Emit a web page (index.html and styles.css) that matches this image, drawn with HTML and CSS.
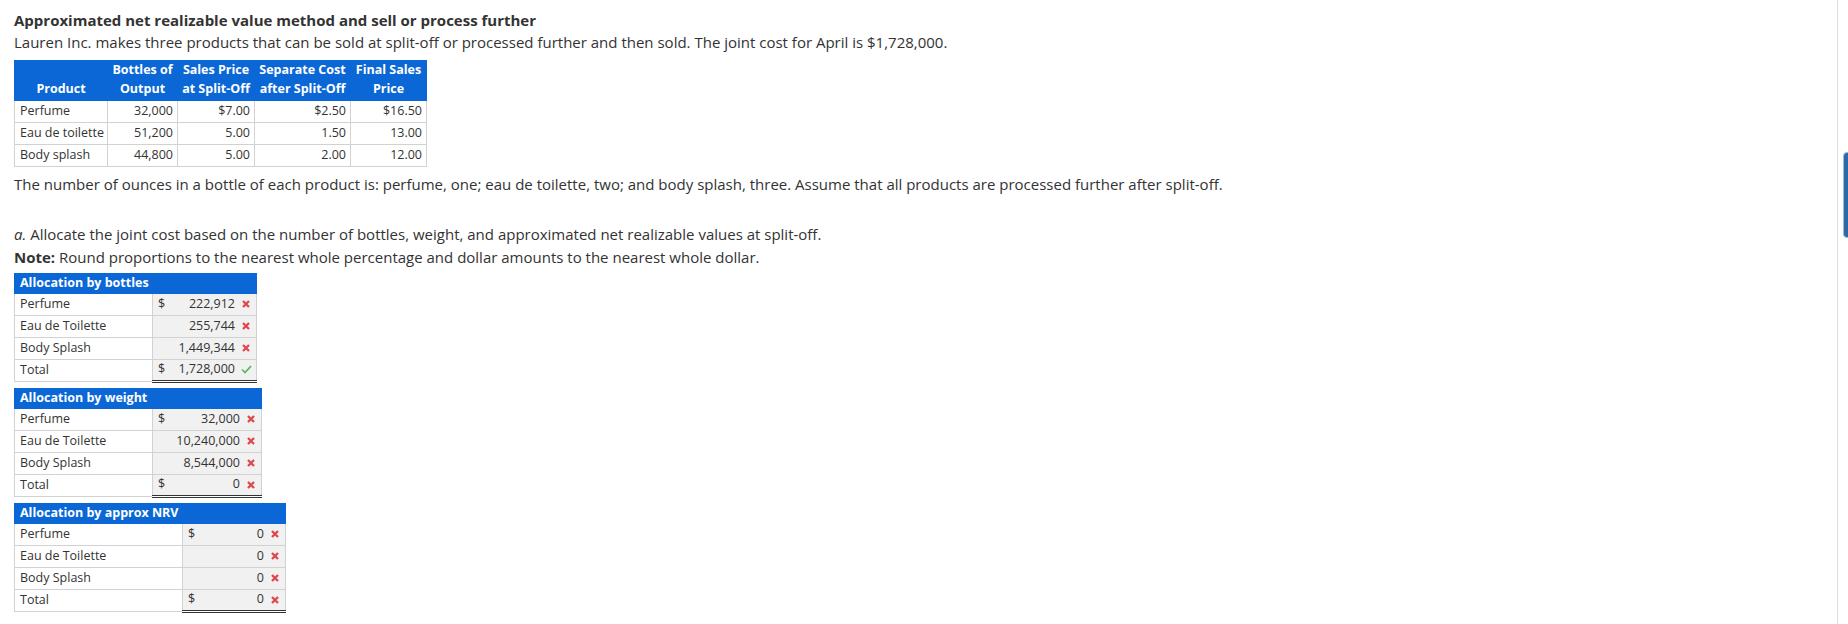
FILE: index.html
```html
<!DOCTYPE html>
<html lang="en">
<head>
<meta charset="utf-8">
<title>Approximated net realizable value method</title>
<link rel="stylesheet" href="styles.css">
</head>
<body>
<div class="layout">
  <main class="main">
    <h1 class="title">Approximated net realizable value method and sell or process further</h1>
    <p class="intro">Lauren Inc. makes three products that can be sold at split-off or processed further and then sold. The joint cost for April is $1,728,000.</p>

    <table class="data">
      <colgroup><col class="c1"><col class="c2"><col class="c3"><col class="c4"><col class="c5"></colgroup>
      <thead>
        <tr>
          <th>Product</th>
          <th>Bottles of<br>Output</th>
          <th>Sales Price<br>at Split-Off</th>
          <th>Separate Cost<br>after Split-Off</th>
          <th>Final Sales<br>Price</th>
        </tr>
      </thead>
      <tbody>
        <tr><td class="name">Perfume</td><td>32,000</td><td>$7.00</td><td>$2.50</td><td>$16.50</td></tr>
        <tr><td class="name">Eau de toilette</td><td>51,200</td><td>5.00</td><td>1.50</td><td>13.00</td></tr>
        <tr><td class="name">Body splash</td><td>44,800</td><td>5.00</td><td>2.00</td><td>12.00</td></tr>
      </tbody>
    </table>

    <p class="txt ounces">The number of ounces in a bottle of each product is: perfume, one; eau de toilette, two; and body splash, three. Assume that all products are processed further after split-off.</p>

    <p class="txt part"><i>a.</i> Allocate the joint cost based on the number of bottles, weight, and approximated net realizable values at split-off.</p>
    <p class="txt note"><b>Note:</b> Round proportions to the nearest whole percentage and dollar amounts to the nearest whole dollar.</p>

    <table class="alloc t-bottles">
      <colgroup><col class="lab"><col class="val"></colgroup>
      <thead><tr><th colspan="2">Allocation by bottles</th></tr></thead>
      <tbody>
        <tr><td>Perfume</td><td class="v"><div class="vin"><span class="cur">$</span><span class="num">222,912</span><span class="mark"><svg class="ix" viewBox="0 0 8 8"><path d="M1 1 L7 7 M7 1 L1 7"/></svg></span></div></td></tr>
        <tr><td>Eau de Toilette</td><td class="v"><div class="vin"><span class="num">255,744</span><span class="mark"><svg class="ix" viewBox="0 0 8 8"><path d="M1 1 L7 7 M7 1 L1 7"/></svg></span></div></td></tr>
        <tr><td>Body Splash</td><td class="v"><div class="vin"><span class="num">1,449,344</span><span class="mark"><svg class="ix" viewBox="0 0 8 8"><path d="M1 1 L7 7 M7 1 L1 7"/></svg></span></div></td></tr>
        <tr class="total"><td>Total</td><td class="v"><div class="vin"><span class="cur">$</span><span class="num">1,728,000</span><span class="mark"><svg class="ick" viewBox="0 0 11 9"><path d="M1 4.5 L4 7.5 L10 1.2"/></svg></span></div></td></tr>
      </tbody>
    </table>

    <table class="alloc t-weight">
      <colgroup><col class="lab"><col class="val"></colgroup>
      <thead><tr><th colspan="2">Allocation by weight</th></tr></thead>
      <tbody>
        <tr><td>Perfume</td><td class="v"><div class="vin"><span class="cur">$</span><span class="num">32,000</span><span class="mark"><svg class="ix" viewBox="0 0 8 8"><path d="M1 1 L7 7 M7 1 L1 7"/></svg></span></div></td></tr>
        <tr><td>Eau de Toilette</td><td class="v"><div class="vin"><span class="num">10,240,000</span><span class="mark"><svg class="ix" viewBox="0 0 8 8"><path d="M1 1 L7 7 M7 1 L1 7"/></svg></span></div></td></tr>
        <tr><td>Body Splash</td><td class="v"><div class="vin"><span class="num">8,544,000</span><span class="mark"><svg class="ix" viewBox="0 0 8 8"><path d="M1 1 L7 7 M7 1 L1 7"/></svg></span></div></td></tr>
        <tr class="total"><td>Total</td><td class="v"><div class="vin"><span class="cur">$</span><span class="num">0</span><span class="mark"><svg class="ix" viewBox="0 0 8 8"><path d="M1 1 L7 7 M7 1 L1 7"/></svg></span></div></td></tr>
      </tbody>
    </table>

    <table class="alloc t-nrv">
      <colgroup><col class="lab"><col class="val"></colgroup>
      <thead><tr><th colspan="2">Allocation by approx NRV</th></tr></thead>
      <tbody>
        <tr><td>Perfume</td><td class="v"><div class="vin"><span class="cur">$</span><span class="num">0</span><span class="mark"><svg class="ix" viewBox="0 0 8 8"><path d="M1 1 L7 7 M7 1 L1 7"/></svg></span></div></td></tr>
        <tr><td>Eau de Toilette</td><td class="v"><div class="vin"><span class="num">0</span><span class="mark"><svg class="ix" viewBox="0 0 8 8"><path d="M1 1 L7 7 M7 1 L1 7"/></svg></span></div></td></tr>
        <tr><td>Body Splash</td><td class="v"><div class="vin"><span class="num">0</span><span class="mark"><svg class="ix" viewBox="0 0 8 8"><path d="M1 1 L7 7 M7 1 L1 7"/></svg></span></div></td></tr>
        <tr class="total"><td>Total</td><td class="v"><div class="vin"><span class="cur">$</span><span class="num">0</span><span class="mark"><svg class="ix" viewBox="0 0 8 8"><path d="M1 1 L7 7 M7 1 L1 7"/></svg></span></div></td></tr>
      </tbody>
    </table>

    <p class="txt next">b. Assume that the joint cost is allocated using the approximated net realizable value method and that each product could also be sold at split-off. Determine which products should be processed further and which should be sold at split-off, and calculate the total effect on profit of processing each product further rather than selling it at split-off.</p>
  </main>
  <aside class="rail"><div class="tab"></div></aside>
</div>
</body>
</html>
```

FILE: styles.css
```css
* { box-sizing: border-box; }

html, body {
  margin: 0;
  background: #ffffff;
}

body {
  font-family: "Open Sans", "Liberation Sans", sans-serif;
  color: #333333;
  font-size: 15px;
  line-height: 22px;
}

.layout {
  display: flex;
  height: 624px;
  overflow: hidden;
}

.main {
  flex: 1;
  min-width: 0;
  padding: 9px 14px 0;
}

.rail {
  width: 11px;
  flex: none;
  border-left: 1px solid #dedede;
  padding: 152px 0 0 5px;
}

.tab {
  width: 12px;
  height: 86px;
  background: #2b6aa6;
  border: 1px solid #9dbbd8;
  border-radius: 4px;
}

.title {
  margin: 0;
  font-size: 15px;
  line-height: 22px;
  font-weight: 700;
  color: #333333;
}

.intro {
  margin: 0 0 7px;
}

/* product data table */
.data {
  border-collapse: collapse;
  table-layout: fixed;
  width: 412px;
  font-size: 12.5px;
  line-height: 18.75px;
  margin-bottom: 6px;
}

.data .c1 { width: 93px; }
.data .c2 { width: 70px; }
.data .c3 { width: 77px; }
.data .c4 { width: 96px; }
.data .c5 { width: 76px; }

.data th {
  background: #0b67d6;
  color: #ffffff;
  font-weight: 700;
  text-align: center;
  vertical-align: bottom;
  border: 1px solid #0b67d6;
  padding: 0 2px 1px;
  height: 39px;
  white-space: nowrap;
}

.data td {
  border: 1px solid #d2d2d2;
  padding: 0 4px 0 5px;
  height: 22px;
  text-align: right;
  white-space: nowrap;
}

.data td.name { text-align: left; }

.txt { margin: 0; }
.ounces { margin-bottom: 28px; }
.note { margin-top: 1px; margin-bottom: 5px; }

/* allocation tables */
.alloc {
  border-collapse: collapse;
  table-layout: fixed;
  font-size: 12.5px;
  line-height: 18.75px;
  margin-bottom: 5px;
}

.t-bottles { width: 243px; }
.t-bottles .lab { width: 138px; }
.t-weight { width: 248px; }
.t-weight .lab { width: 138px; }
.t-nrv { width: 272px; }
.t-nrv .lab { width: 168px; }

.alloc th {
  background: #0b67d6;
  color: #ffffff;
  font-weight: 700;
  text-align: left;
  border: 1px solid #0b67d6;
  padding: 0 5px;
  height: 20px;
}

.alloc td {
  border: 1px solid #d2d2d2;
  padding: 0 5px;
  height: 22px;
  white-space: nowrap;
}

.alloc td.v {
  background: #f1f1f1;
  padding: 0 4px 0 5px;
}

.alloc tr.total td.v {
  border-top: 1px solid #333333;
  border-bottom: 3px double #333333;
}

.vin {
  display: flex;
  align-items: center;
}

.num { margin-left: auto; }

.mark {
  width: 12px;
  margin-left: 5px;
  display: flex;
  justify-content: center;
  align-items: center;
}

.ix {
  width: 8px;
  height: 8px;
  fill: none;
  stroke: #e0474c;
  stroke-width: 2.3;
}

.ick {
  width: 11px;
  height: 9px;
  fill: none;
  stroke: #5cb85c;
  stroke-width: 1.7;
}

.next {
  margin-top: 4px;
}
```
